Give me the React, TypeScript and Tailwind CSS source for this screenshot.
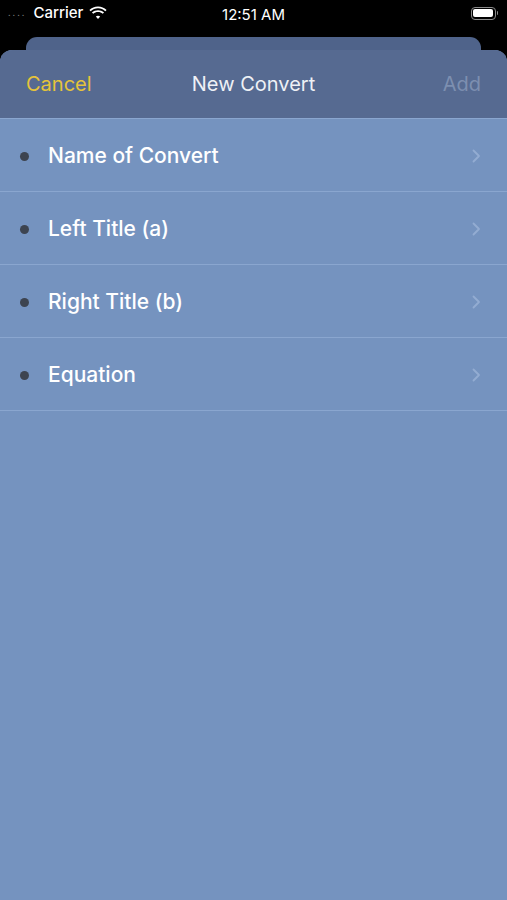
import React from 'react';

const rows = ['Name of Convert', 'Left Title (a)', 'Right Title (b)', 'Equation'];

function Wifi() {
  return (
    <svg width="20" height="14" viewBox="0 0 18 13" fill="white">
      <path d="M9 2.2c2.6 0 5 1 6.8 2.7l1.2-1.2C14.9 1.7 12.1.5 9 .5S3.1 1.7 1 3.7l1.2 1.2C4 3.2 6.4 2.2 9 2.2z" />
      <path d="M9 5.6c1.7 0 3.2.6 4.4 1.7l1.2-1.2C13.1 4.7 11.1 3.9 9 3.9s-4.1.8-5.6 2.2l1.2 1.2C5.8 6.2 7.3 5.6 9 5.6z" />
      <path d="M9 9c.8 0 1.5.3 2 .8L9 12 7 9.8c.5-.5 1.2-.8 2-.8z" />
    </svg>
  );
}

function Battery() {
  return (
    <div className="flex items-center">
      <div className="flex h-[13px] w-[25px] items-center rounded-[4px] border border-[#8a8a8a] p-[1.5px]">
        <div className="h-full w-full rounded-[2px] bg-white" />
      </div>
      <div className="ml-[1px] h-[4px] w-[1.5px] rounded-r bg-[#8a8a8a]" />
    </div>
  );
}

export default function App() {
  return (
    <div
      className="flex h-[900px] w-[507px] flex-col overflow-hidden bg-black"
      style={{ fontFamily: 'Inter, "Liberation Sans", sans-serif' }}
    >
      <div className="relative flex h-[26px] items-center px-[8px] text-[15px] text-white">
        <div className="flex items-center gap-[5px]">
          <span className="pr-[2px] text-[9px] tracking-[2px] text-[#777]">....</span>
          <span className="font-medium">Carrier</span>
          <Wifi />
        </div>
        <span className="absolute left-1/2 top-[4px] -translate-x-1/2">12:51 AM</span>
        <div className="ml-auto mr-[1px]">
          <Battery />
        </div>
      </div>

      <div className="mx-[26px] mt-[11px] h-[13px] rounded-t-[11px] bg-[#4f638a]" />

      <div className="flex flex-1 flex-col overflow-hidden rounded-t-[12px] bg-[#7593bf]">
        <div className="relative flex h-[69px] shrink-0 items-center justify-between border-b border-[#8aa6cf] bg-[#566a91] px-[26px] text-[20px]">
          <span className="text-[#e6c43a]">Cancel</span>
          <span className="absolute left-1/2 -translate-x-1/2 text-[#eef1f6]">New Convert</span>
          <span className="text-[#7d8fb0]">Add</span>
        </div>
        {rows.map((r) => (
          <div
            key={r}
            className="flex h-[73px] shrink-0 items-center border-b border-[#8aa6cf] pl-[20px] pr-[26px] pt-[2px]"
          >
            <div className="h-[9px] w-[9px] rounded-full bg-[#3d4450]" />
            <span className="ml-[19px] text-[21px] font-medium text-white">{r}</span>
            <svg className="ml-auto" width="9" height="14" viewBox="0 0 9 14" fill="none">
              <path d="M1.5 1.5l5.5 5.5-5.5 5.5" stroke="#93acd2" strokeWidth="1.8" strokeLinecap="round" strokeLinejoin="round" />
            </svg>
          </div>
        ))}
      </div>
    </div>
  );
}
